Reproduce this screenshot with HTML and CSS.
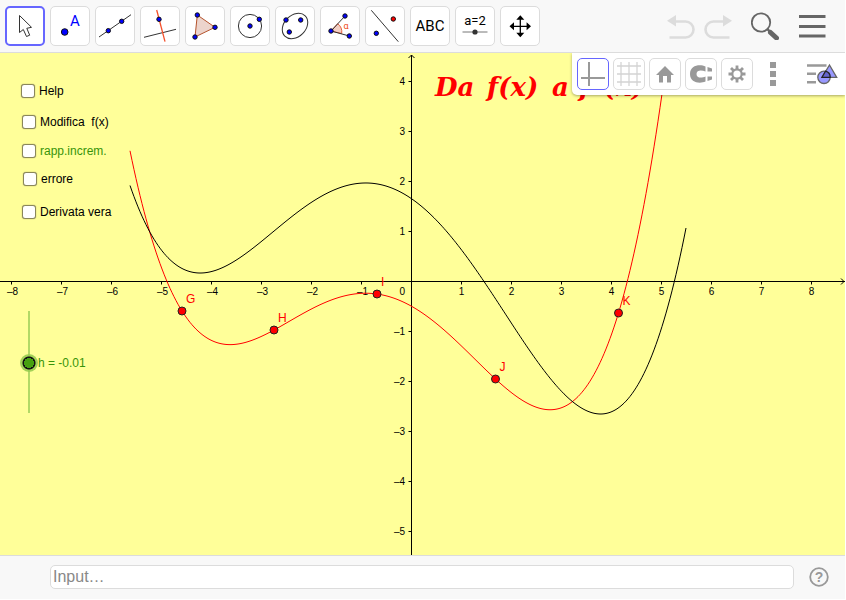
FILE: index.html
```
<!DOCTYPE html>
<html lang="it">
<head>
    <meta charset="UTF-8">
    <meta name="viewport" content="width=device-width, initial-scale=1.0">
    <title>Da f(x) a f'(x)</title>
    <link rel="stylesheet" href="styles.css">
</head>
<body>
    <div class="app">
        <header class="toolbar">
            <div class="tools">
                <button class="tool selected" aria-label="Move">
                    <svg viewBox="2 2 36 36"><path class="ink" fill="#fff" d="M14.5 9.5V26.5L18.3 23.5L21.5 30.5L24.7 29.2L21.8 22.3L26.5 21.3Z"/></svg>
                </button>
                <button class="tool" aria-label="Point">
                    <svg viewBox="2 2 36 36"><circle class="dot" cx="14.7" cy="26" r="3.3"/><text x="20" y="20" font-size="15" fill="#00f">A</text></svg>
                </button>
                <button class="tool" aria-label="Line">
                    <svg viewBox="2 2 36 36"><path class="ink" d="M4 31L36 8.7"/><circle class="dot" cx="13.3" cy="24.7" r="2.2"/><circle class="dot" cx="26.7" cy="15.3" r="2.2"/></svg>
                </button>
                <button class="tool" aria-label="Perpendicular line">
                    <svg viewBox="2 2 36 36"><path class="ink" d="M4 31.3L36 23.3"/><path class="orange" d="M16.7 4L25 35.7"/><circle class="dot" cx="19" cy="13.3" r="2.2"/></svg>
                </button>
                <button class="tool" aria-label="Polygon">
                    <svg viewBox="2 2 36 36"><path fill="#ecd4cc" stroke="#b5532c" d="M12.3 9L30 21.3L10 31Z"/><circle class="dot" cx="12.3" cy="9" r="2.2"/><circle class="dot" cx="30" cy="21.3" r="2.2"/><circle class="dot" cx="10" cy="31" r="2.2"/></svg>
                </button>
                <button class="tool" aria-label="Circle">
                    <svg viewBox="2 2 36 36"><circle class="ink" cx="20" cy="20" r="11.6"/><circle class="dot" cx="20" cy="20" r="2.2"/><circle class="dot" cx="29.3" cy="13.3" r="2.2"/></svg>
                </button>
                <button class="tool" aria-label="Ellipse">
                    <svg viewBox="2 2 36 36"><ellipse class="ink" cx="20" cy="20" rx="14.4" ry="10.8" transform="rotate(-45 20 20)"/><circle class="dot" cx="11" cy="14" r="2.2"/><circle class="dot" cx="25.7" cy="14" r="2.2"/><circle class="dot" cx="14.3" cy="26" r="2.2"/></svg>
                </button>
                <button class="tool" aria-label="Angle">
                    <svg viewBox="2 2 36 36"><path fill="#f3cfc4" stroke="#e8603c" d="M11 25L17.7 17.7A10.5 10.5 0 0 1 21.7 27.5Z"/><path class="ink" d="M25 10L11 25L29.3 30"/><circle class="dot" cx="25" cy="10" r="2.2"/><circle class="dot" cx="11" cy="25" r="2.2"/><circle class="dot" cx="29.3" cy="30" r="2.2"/><text x="23.5" y="23" font-size="9" fill="#f04a20">α</text></svg>
                </button>
                <button class="tool" aria-label="Reflect">
                    <svg viewBox="2 2 36 36"><path class="ink" d="M6.3 4.3L33.3 35.7"/><circle class="dot red" cx="28.3" cy="13" r="2.2"/><circle class="dot" cx="11.3" cy="27.3" r="2.2"/></svg>
                </button>
                <button class="tool" aria-label="Text">
                    <svg viewBox="2 2 36 36"><text x="20" y="25" font-size="15" text-anchor="middle">ABC</text></svg>
                </button>
                <button class="tool" aria-label="Slider">
                    <svg viewBox="2 2 36 36"><text x="20" y="19" font-size="13" text-anchor="middle">a=2</text><path stroke="#777" d="M7.5 26H32.5"/><circle cx="20" cy="26" r="2.6" fill="#333"/></svg>
                </button>
                <button class="tool" aria-label="Move view">
                    <svg viewBox="2 2 36 36"><path stroke="#000" stroke-width="1.3" d="M12 20.3H28.6M20.3 12V28.6"/><path d="M9.5 20.3L14 16.3V24.3ZM31 20.3L26.6 16.3V24.3ZM20.3 9.3L16.3 13.8H24.3ZM20.3 31.3L16.3 26.8H24.3Z"/></svg>
                </button>
            </div>
            <div class="actions">
                <div class="history">
                    <button class="action" aria-label="Undo" disabled>
                        <svg viewBox="0 0 28 28"><path d="M0 8.7L9 3V14.5Z" fill="#dcdcdc"/><path d="M8 9.5H18.5a8 8 0 0 1 0 16H2.5" fill="none" stroke="#dcdcdc" stroke-width="2.6"/></svg>
                    </button>
                    <button class="action" aria-label="Redo" disabled>
                        <svg viewBox="0 0 28 28"><path d="M28 8.7L19 3V14.5Z" fill="#dcdcdc"/><path d="M20 9.5H9.500a8 8 0 0 0 0 16H25.5" fill="none" stroke="#dcdcdc" stroke-width="2.6"/></svg>
                    </button>
                </div>
                <button class="action" aria-label="Search">
                    <svg viewBox="0 0 28 28"><circle cx="10" cy="10.5" r="9.2" fill="none" stroke="#666" stroke-width="1.8"/><path d="M16.5 17L19 20" stroke="#666" stroke-width="2.5"/><path d="M19.5 20.5L25.5 26" stroke="#666" stroke-width="5" stroke-linecap="round"/></svg>
                </button>
                <button class="action" aria-label="Menu">
                    <svg viewBox="0 0 28 28"><path d="M1 4.5H27.500M1 14.5H27.500M1 24H27.500" stroke="#666" stroke-width="3"/></svg>
                </button>
            </div>
        </header>

        <main class="graph">
            <svg class="plot" id="plot" role="img" aria-label="Grafico">
                <g id="axes"></g>
                <path id="curveRed" class="curve curve-red"/>
                <path id="curveBlack" class="curve"/>
                <g id="points"></g>
                <text class="title" y="43"><tspan x="435">Da</tspan><tspan x="487">f(x)</tspan><tspan x="552">a</tspan><tspan x="579">f'</tspan><tspan x="604">(x)</tspan></text>
            </svg>

            <label class="check check-help"><input type="checkbox">Help</label>
            <label class="check check-modifica"><input type="checkbox">Modifica&nbsp; f(x)</label>
            <label class="check check-rapp"><input type="checkbox">rapp.increm.</label>
            <label class="check check-errore"><input type="checkbox">errore</label>
            <label class="check check-derivata"><input type="checkbox">Derivata vera</label>

            <input class="slider" id="h" type="range" min="-1" max="1" step="0.01" value="-0.01">
            <label class="slider-label" for="h">h = <span id="hValue">-0.01</span></label>

            <div class="stylebar">
                <button class="style-btn selected" aria-label="Axes">
                    <svg viewBox="0 0 32 32"><path d="M12 4V28M4 20H28" stroke="#999" stroke-width="2"/></svg>
                </button>
                <button class="style-btn" aria-label="Grid">
                    <svg viewBox="0 0 32 32"><path d="M8 4V28M16 4V28M24 4V28M4 8H28M4 16H28M4 24H28" stroke="#d4d4d4" stroke-width="1.3"/></svg>
                </button>
                <button class="style-btn" aria-label="Home">
                    <svg viewBox="0 0 32 32"><path d="M16 8L7 17H10V24.5H14V18H18V24.5H22V17H25Z" fill="#999"/></svg>
                </button>
                <button class="style-btn" aria-label="Snap">
                    <svg viewBox="0 0 32 32"><path d="M20.5 8.500C15 6 5 7 5 16S15 26 20.5 23.500V18.500C17 20 11.5 20.500 11.5 16S17 12 20.5 13.500ZM22.5 9L27 10.500V13.500H22.500ZM22.5 18.500H27V21.500L22.5 23Z" fill="#999"/></svg>
                </button>
                <button class="style-btn" aria-label="Settings">
                    <svg viewBox="0 0 32 32"><g fill="none" stroke="#999"><circle cx="16" cy="16" r="4.7" stroke-width="2.2"/><path stroke-width="2.8" d="M16 7.5V11M16 21V24.5M7.5 16H11M21 16H24.5M10 10L12.5 12.5M19.5 19.5L22 22M10 22L12.5 19.5M19.5 12.5L22 10"/></g></svg>
                </button>
                <button class="style-btn plain" aria-label="More">
                    <svg viewBox="0 0 32 32"><path d="M13 4H19V10H13ZM13 13H19V19H13ZM13 22H19V28H13Z" fill="#999"/></svg>
                </button>
                <button class="style-btn plain wide" aria-label="Algebra view">
                    <svg viewBox="0 0 40 32"><path d="M8 7.5H27.5M8 15.7H17M8 24.3H17" stroke="#999" stroke-width="2.4"/><circle cx="25" cy="19.3" r="6.2" fill="#99f" stroke="#666" stroke-width="1.3"/><path d="M30.5 7L37.7 19.3H23Z" fill="#99f" stroke="#666" stroke-width="1.3"/><path d="M26.5 13.2L23 19.3H31.2A6.2 6.2 0 0 0 26.5 13.2Z" fill="#66c" stroke="#222" stroke-width="1.3"/></svg>
                </button>
            </div>
        </main>

        <footer class="inputbar">
            <input class="command" type="text" placeholder="Input…" aria-label="Input">
            <button class="help" aria-label="Help">
                <svg viewBox="0 0 20 20"><circle cx="10" cy="10" r="8.8" fill="none" stroke="#999" stroke-width="1.8"/><text x="10" y="15" text-anchor="middle" font-size="14" font-weight="bold" fill="#999">?</text></svg>
            </button>
        </footer>
    </div>

    <script>
        const NS = 'http://www.w3.org/2000/svg';
        const ORIGIN_X = 411.5;
        const ORIGIN_Y = 228.5;
        const UNIT = 50;

        // [x, y, label] in graph pixels
        const points = [
            [182, 258, 'G'],
            [274, 277, 'H'],
            [377, 241, 'I'],
            [495.5, 326, 'J'],
            [618.5, 260, 'K']
        ];
        const blackNodes = [[130, 132.5], [199, 220], [364, 130], [484, 228.5], [600, 361], [686, 175]];

        function add(parent, name, attrs, text) {
            const el = document.createElementNS(NS, name);
            for (const key in attrs) el.setAttribute(key, attrs[key]);
            if (text) el.textContent = text;
            parent.appendChild(el);
        }

        // polynomial through all the nodes
        function lagrange(nodes, x) {
            return nodes.reduce((sum, [xi, yi]) => {
                let term = yi;
                nodes.forEach(([xj]) => {
                    if (xj !== xi) term *= (x - xj) / (xi - xj);
                });
                return sum + term;
            }, 0);
        }

        function curve(nodes, from, to) {
            const list = [];
            for (let x = from; x <= to; x += 2) list.push(x + ' ' + lagrange(nodes, x).toFixed(2));
            return 'M' + list.join('L');
        }

        function drawAxes() {
            const axes = document.getElementById('axes');
            const plot = document.getElementById('plot');
            const w = plot.clientWidth;
            const h = plot.clientHeight;
            axes.innerHTML = '';

            add(axes, 'path', {
                class: 'axis',
                d: `M0 ${ORIGIN_Y}H${w}M${w - 4} ${ORIGIN_Y - 3}l3 3l-3 3M${ORIGIN_X} ${h}V2M${ORIGIN_X - 3} 5l3 -3l3 3`
            });
            for (let i = -Math.floor(ORIGIN_X / UNIT); ORIGIN_X + i * UNIT < w - 10; i++) {
                if (i === 0) continue;
                const x = ORIGIN_X + i * UNIT;
                add(axes, 'path', { class: 'axis', d: `M${x} ${ORIGIN_Y}v3` });
                add(axes, 'text', { class: 'num', x: i < 0 ? x + 1 : x, y: 242, 'text-anchor': 'middle' }, String(i).replace('-', '–'));
            }
            for (let i = 4; ORIGIN_Y - i * UNIT < h - 10; i--) {
                if (i === 0) continue;
                const y = ORIGIN_Y - i * UNIT;
                add(axes, 'path', { class: 'axis', d: `M${ORIGIN_X} ${y}h-3` });
                add(axes, 'text', { class: 'num', x: 405, y: y + 3.5, 'text-anchor': 'end' }, String(i).replace('-', '–'));
            }
            add(axes, 'text', { class: 'num', x: 405, y: 242, 'text-anchor': 'end' }, '0');
        }

        document.getElementById('curveRed').setAttribute('d', curve(points, 130, 670));
        document.getElementById('curveBlack').setAttribute('d', curve(blackNodes, 130, 686));

        points.forEach(([x, y, name]) => {
            const group = document.getElementById('points');
            add(group, 'circle', { class: 'point', cx: x, cy: y, r: 4 });
            add(group, 'text', { class: 'point-name', x: x + 4, y: y - 8 }, name);
        });

        document.getElementById('h').addEventListener('input', e => {
            document.getElementById('hValue').textContent = e.target.value;
        });

        window.addEventListener('resize', drawAxes);
        drawAxes();
    </script>
</body>
</html>
```
FILE: styles.css
```
* {
    box-sizing: border-box;
}

body {
    margin: 0;
    background: #fff;
    font-family: "Liberation Sans", Arial, sans-serif;
    font-size: 12px;
    color: #000;
}

button {
    padding: 0;
    border: none;
    background: none;
    cursor: pointer;
}

.app {
    display: flex;
    flex-direction: column;
    height: calc(100vh - 1px);
    margin-right: 1px;
    background: #f8f8f8;
}

/* top toolbar */
.toolbar {
    display: flex;
    justify-content: space-between;
    padding: 6px 15px 6px 5px;
    border-bottom: 1px solid #dcdcdc;
}

.tools {
    display: flex;
    gap: 5px;
}

.tool {
    display: grid;
    place-content: center;
    width: 40px;
    height: 40px;
    border: 1px solid #dcdcdc;
    border-radius: 5px;
    background: #fff;
}

.tool.selected {
    border: 2px solid #6666ff;
}

.tool svg {
    display: block;
    width: 36px;
    height: 36px;
    font-family: Roboto, sans-serif;
}

.ink {
    fill: none;
    stroke: #333;
}

.orange {
    stroke: #f4512c;
    stroke-width: 1.3;
}

.dot {
    fill: #00f;
    stroke: #111;
}

.dot.red {
    fill: #f00;
}

.actions {
    display: flex;
    align-items: center;
    gap: 10px;
}

.history {
    display: flex;
}

.action {
    display: grid;
    place-content: center;
    width: 37px;
    height: 40px;
}

.action svg {
    width: 28px;
    height: 28px;
}

/* graph view */
.graph {
    position: relative;
    flex: 1;
    min-height: 0;
    overflow: hidden;
    background: #ffff99;
}

.plot {
    display: block;
    width: 100%;
    height: 100%;
}

.axis {
    fill: none;
    stroke: #000;
}

.num {
    font-size: 10px;
}

.curve {
    fill: none;
    stroke: #000;
}

.curve-red {
    stroke: #f00;
}

.point {
    fill: #f00;
    stroke: #222;
}

.point-name {
    font-size: 12px;
    fill: #f00;
}

.title {
    font-family: "DejaVu Serif", serif;
    font-size: 26px;
    font-weight: bold;
    font-style: italic;
    fill: #f00;
}

.check {
    position: absolute;
    display: flex;
    align-items: center;
    gap: 4px;
    line-height: 14px;
    white-space: nowrap;
}

.check input {
    appearance: none;
    width: 14px;
    height: 14px;
    margin: 0;
    border: 1px solid #8a875a;
    border-radius: 3px;
    background: #fff;
    box-shadow: 0 0 1px #77744a;
}

.check input:checked {
    background: #77744a;
}

.check-help {
    left: 21px;
    top: 31px;
}

.check-modifica {
    left: 22px;
    top: 62px;
}

.check-rapp {
    left: 22px;
    top: 91px;
    color: #38940a;
}

.check-errore {
    left: 23px;
    top: 119px;
}

.check-derivata {
    left: 22px;
    top: 152px;
}

.slider {
    position: absolute;
    left: 20px;
    top: 250px;
    width: 18px;
    height: 118px;
    margin: 0;
    appearance: none;
    writing-mode: vertical-lr;
    direction: rtl;
    background: linear-gradient(#b2d966, #b2d966) center / 2px 102px no-repeat;
}

.slider::-webkit-slider-thumb {
    appearance: none;
    width: 18px;
    height: 18px;
    border-radius: 50%;
    background: radial-gradient(circle, #46a010 5px, #111 5px, #111 6px, rgba(152, 204, 80, 0.9) 7px);
}

.slider-label {
    position: absolute;
    left: 38px;
    top: 303px;
    line-height: 14px;
    color: #38940a;
}

/* style bar over the graph */
.stylebar {
    position: absolute;
    top: 0;
    right: 0;
    display: flex;
    gap: 4px;
    padding: 5px 0 5px 5px;
    border-bottom-left-radius: 5px;
    background: #fff;
    box-shadow: 0 1px 3px rgba(0, 0, 0, 0.35);
}

.style-btn {
    display: grid;
    place-content: center;
    width: 32px;
    height: 32px;
    border: 1px solid #dcdcdc;
    border-radius: 5px;
}

.style-btn.selected {
    border-color: #6666ff;
}

.style-btn.plain {
    border: none;
}

.style-btn.wide {
    width: 52px;
}

.style-btn svg {
    display: block;
    height: 32px;
    margin: -1px;
}

/* input bar */
.inputbar {
    display: flex;
    align-items: center;
    gap: 15px;
    height: 44px;
    padding: 0 16px 2px 50px;
    border-top: 1px solid #dcdcdc;
}

.command {
    flex: 1;
    height: 24px;
    padding: 0 2px;
    border: 1px solid #dcdcdc;
    border-radius: 5px;
    background: #fff;
    font-family: inherit;
    font-size: 16px;
}

.command::placeholder {
    color: #888;
}

.help svg {
    display: block;
    width: 20px;
    height: 20px;
}
```
